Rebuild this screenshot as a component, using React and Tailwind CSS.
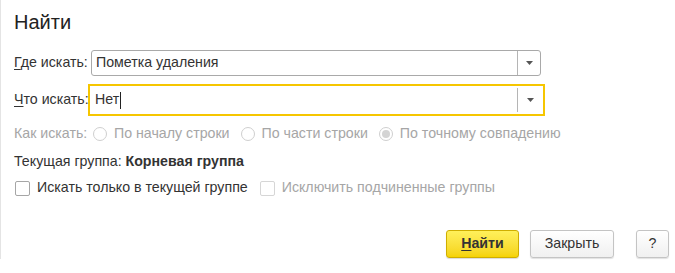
import React from 'react';

const font = { fontFamily: '"Liberation Sans", Arial, sans-serif' };

const Arrow = () => (
    <svg width="7" height="4" viewBox="0 0 7 4" className="block">
        <path d="M0 0h7L3.5 4z" fill="#555" />
    </svg>
);

const Radio = ({ label, checked }) => (
    <div className="flex items-center gap-[7px]">
        <span className="w-[14px] h-[14px] rounded-full border border-[#cfcfcf] bg-white flex items-center justify-center">
            {checked && <span className="w-[8px] h-[8px] rounded-full bg-[#d4d4d4]" />}
        </span>
        <span className="text-[#a6a6a6]">{label}</span>
    </div>
);

const Checkbox = ({ label, disabled }) => (
    <div className="flex items-center gap-[7px]">
        <span
            className={
                disabled
                    ? 'w-[15px] h-[15px] rounded-[2px] border border-[#d6d6d6] bg-white'
                    : 'w-[15px] h-[15px] rounded-[2px] border border-[#a6a6a6] bg-white'
            }
        />
        <span className={disabled ? 'text-[#a6a6a6]' : 'text-[#333]'}>{label}</span>
    </div>
);

export default function App() {
    return (
        <div className="w-[675px] h-[273px] bg-white text-[14.2px] text-[#333] overflow-hidden whitespace-nowrap" style={font}>
            <div className="h-[259px] border-l border-[#e4e4e4] flex flex-col pl-[13px] pr-[6px]">
                {/* Title */}
                <div className="mt-[12px] h-[20px] leading-[20px] text-[20px] text-[#222]">Найти</div>

                {/* Где искать */}
                <div className="mt-[18px] flex items-center h-[26px]">
                    <div className="w-[77px] shrink-0">
                        <span className="underline underline-offset-2">Г</span>де искать:
                    </div>
                    <div className="w-[450px] h-[26px] border border-[#a9a9a9] rounded-[3px] flex items-stretch bg-white">
                        <div className="flex-1 flex items-center px-[4px]">Пометка удаления</div>
                        <div className="w-[23px] border-l border-[#b5b5b5] flex items-center justify-center">
                            <Arrow />
                        </div>
                    </div>
                </div>

                {/* Что искать */}
                <div className="mt-[8px] flex items-center h-[32px]">
                    <div className="w-[74px] shrink-0">
                        <span className="underline underline-offset-2">Ч</span>то искать:
                    </div>
                    <div className="w-[457px] h-[32px] border-2 border-[#f6c600] flex items-stretch bg-white">
                        <div className="flex-1 flex items-center pl-[5px]">
                            Нет<span className="inline-block w-px h-[17px] bg-[#222] ml-px" />
                        </div>
                        <div className="w-[26px] my-[2px] border-l border-[#b5b5b5] flex items-center justify-center">
                            <Arrow />
                        </div>
                    </div>
                </div>

                {/* Как искать */}
                <div className="mt-[8px] h-[20px] flex items-center">
                    <div className="w-[79px] shrink-0 text-[#a6a6a6]">Как искать:</div>
                    <div className="flex items-center gap-[11px]">
                        <Radio label="По началу строки" />
                        <Radio label="По части строки" />
                        <Radio label="По точному совпадению" checked />
                    </div>
                </div>

                {/* Текущая группа */}
                <div className="mt-[8px] h-[20px] flex items-center">
                    Текущая группа:&nbsp;<span className="font-bold">Корневая группа</span>
                </div>

                {/* Checkboxes */}
                <div className="mt-[6px] h-[20px] flex items-center gap-[12px] pl-[1px]">
                    <Checkbox label="Искать только в текущей группе" />
                    <Checkbox label="Исключить подчиненные группы" disabled />
                </div>

                {/* Buttons */}
                <div className="mt-auto mb-px flex justify-end items-center">
                    <button className="w-[73px] h-[28px] rounded-[3px] border border-[#cfae00] bg-gradient-to-b from-[#fff05a] to-[#f5d300] font-bold text-[#333] shadow-[0_1px_1px_rgba(0,0,0,0.15)]">
                        <span className="underline underline-offset-2">Н</span>айти
                    </button>
                    <button className="ml-[11px] w-[84px] h-[28px] rounded-[3px] border border-[#c4c4c4] bg-gradient-to-b from-white to-[#f0f0f0] text-[#333] shadow-[0_1px_1px_rgba(0,0,0,0.12)]">
                        Закрыть
                    </button>
                    <button className="ml-[22px] w-[33px] h-[28px] rounded-[3px] border border-[#c4c4c4] bg-gradient-to-b from-white to-[#f0f0f0] text-[#333] shadow-[0_1px_1px_rgba(0,0,0,0.12)]">
                        ?
                    </button>
                </div>
            </div>
        </div>
    );
}
